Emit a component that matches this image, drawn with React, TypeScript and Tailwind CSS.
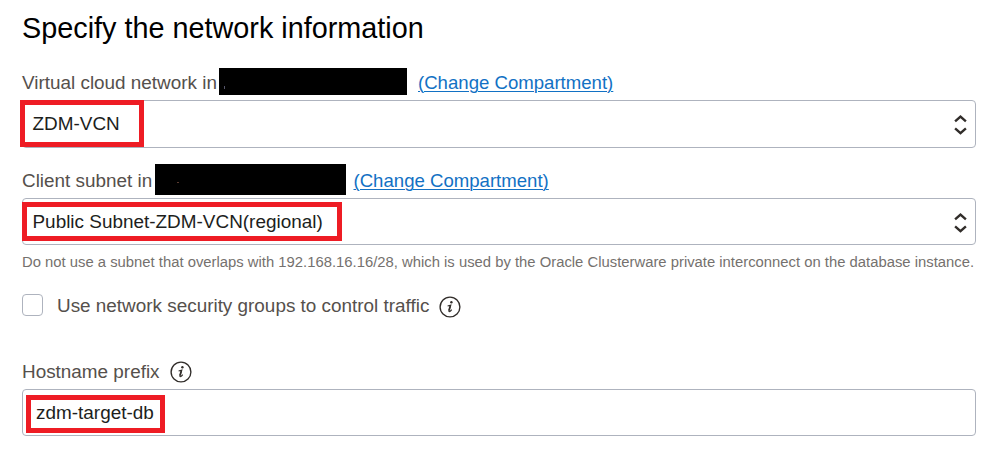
import type { ReactNode } from "react";

function InfoIcon() {
  return (
    <svg width="22" height="22" viewBox="0 0 22 22" fill="none" className="shrink-0">
      <circle cx="11" cy="11" r="9.9" stroke="#312d2a" strokeWidth="1.35" />
      <circle cx="12.4" cy="6.3" r="1.2" fill="#312d2a" />
      <path d="M8.6 10L11.8 9.1L10 14.3Q9.6 16 10.8 15.5Q11.8 14.9 12.7 13.6" stroke="#312d2a" strokeWidth="1.1" />
      <path d="M11.4 9.6L10 14.6" stroke="#312d2a" strokeWidth="1.7" />
    </svg>
  );
}

function SelectArrows() {
  return (
    <svg width="13" height="22" viewBox="0 0 13 22" fill="none" stroke="#312d2a" strokeWidth="2.4" className="ml-auto mr-[8px] mt-[2px] shrink-0">
      <path d="M1.1 7.3L6.5 2.5L11.9 7.3" />
      <path d="M1.1 14.4L6.5 19.2L11.9 14.4" />
    </svg>
  );
}

function Highlight({ className }: { className: string }) {
  return <span className={`pointer-events-none absolute border-[5px] border-[#ee1c24] ${className}`} />;
}

function CompartmentLabel({ text, width, children }: { text: string; width: string; children: ReactNode }) {
  return (
    <div className="flex h-[30px] items-center whitespace-nowrap text-[18.9px] text-[#55504c]">
      <span className={`mt-[2px] shrink-0 ${width}`}>{text}</span>
      {children}
      <a href="#" className="mt-[2px] text-[18.6px] text-[#1271c4] underline decoration-1 underline-offset-[2px]">(Change Compartment)</a>
    </div>
  );
}

export default function App() {
  return (
    <main className="flex h-[450px] w-[988px] flex-col overflow-hidden bg-white pl-[22px] pr-3 font-['Liberation_Sans',Arial,sans-serif]">
      <h1 className="mt-[11px] h-[34px] whitespace-nowrap text-[28.8px] leading-[34px] text-black">Specify the network information</h1>

      <section className="mt-[22px]">
        <CompartmentLabel text="Virtual cloud network in" width="w-[197px]">
          <span className="mb-[2px] mr-[11px] h-[27px] w-[188px] shrink-0 bg-black pl-[5px] pt-[18px]">
            <span className="block h-[3px] w-px bg-[#55556a]" />
          </span>
        </CompartmentLabel>
        <div className="relative mt-[3px] flex h-12 items-center rounded border border-[#aeb3be] pl-[9.5px] text-[18.93px] text-[#201e1c]">
          <span>ZDM-VCN</span>
          <SelectArrows />
          <Highlight className="-left-[3px] -top-px h-[47px] w-[124px]" />
        </div>
      </section>

      <section className="mt-[17px]">
        <CompartmentLabel text="Client subnet in" width="w-[133px]">
          <span className="mb-[2px] mr-[7.5px] h-[31px] w-[191px] shrink-0 bg-black pl-[22px] pt-[18px]">
            <span className="block h-px w-[2px] bg-[#5a3b30]" />
          </span>
        </CompartmentLabel>
        <div className="relative mt-[3px] flex h-[47px] items-center rounded border border-[#aeb3be] pl-[9.5px] text-[18.93px] text-[#201e1c]">
          <span className="mt-[2px]">Public Subnet-ZDM-VCN(regional)</span>
          <SelectArrows />
          <Highlight className="-left-px top-[3px] h-[39px] w-[320px]" />
        </div>
        <p className="mt-[7px] h-5 whitespace-nowrap text-[14.84px] leading-5 text-[#75716e]">
          Do not use a subnet that overlaps with 192.168.16.16/28, which is used by the Oracle Clusterware private interconnect on the database instance.
        </p>
      </section>

      <label className="mt-[22px] flex h-[22px] items-center whitespace-nowrap text-[18.9px] text-[#55504c]">
        <input type="checkbox" className="mr-[14px] h-[22px] w-[21px] shrink-0 appearance-none rounded border border-[#aeb3be]" />
        <span className="mt-[2px]">Use network security groups to control traffic</span>
        <span className="ml-[10px] mt-1"><InfoIcon /></span>
      </label>

      <section className="mt-[45px]">
        <div className="flex h-[22px] items-center text-[18.9px] text-[#55504c]">
          <span>Hostname prefix</span>
          <span className="ml-[10px]"><InfoIcon /></span>
        </div>
        <div className="relative mt-[6px] flex h-[47px] items-center rounded border border-[#aeb3be] pl-[13px] text-[18.93px] text-[#201e1c]">
          <span className="mt-[2px]">zdm-target-db</span>
          <Highlight className="left-[3px] top-[5px] h-[38px] w-[139px]" />
        </div>
      </section>
    </main>
  );
}
